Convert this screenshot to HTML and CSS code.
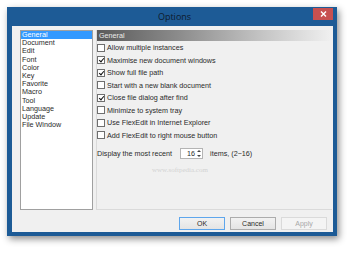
FILE: index.html
```html
<!DOCTYPE html>
<html lang="en">
<head>
    <meta charset="UTF-8">
    <title>Options</title>
    <link rel="stylesheet" href="styles.css">
</head>
<body>
    <div class="window">
        <div class="titlebar">
            <span class="title">Options</span>
            <div class="close">
                <svg width="7" height="6" viewBox="0 0 7 6">
                    <path d="M1 0.5 L6 5.5 M6 0.5 L1 5.5" stroke="#fff" stroke-width="1.4"/>
                </svg>
            </div>
        </div>

        <div class="client">
            <div class="main">
                <ul class="pages">
                    <li class="selected">General</li>
                    <li>Document</li>
                    <li>Edit</li>
                    <li>Font</li>
                    <li>Color</li>
                    <li>Key</li>
                    <li>Favorite</li>
                    <li>Macro</li>
                    <li>Tool</li>
                    <li>Language</li>
                    <li>Update</li>
                    <li>File Window</li>
                </ul>

                <div class="panel">
                    <div class="panel-head">General</div>

                    <div class="options">
                        <div class="opt"><span class="box"></span>Allow multiple instances</div>
                        <div class="opt"><span class="box checked"></span>Maximise new document windows</div>
                        <div class="opt"><span class="box checked"></span>Show full file path</div>
                        <div class="opt"><span class="box"></span>Start with a new blank document</div>
                        <div class="opt"><span class="box checked"></span>Close file dialog after find</div>
                        <div class="opt"><span class="box"></span>Minimize to system tray</div>
                        <div class="opt"><span class="box"></span>Use FlexEdit in Internet Explorer</div>
                        <div class="opt"><span class="box"></span>Add FlexEdit to right mouse button</div>
                    </div>

                    <div class="recent">
                        <span>Display the most recent</span>
                        <div class="spin">
                            <span class="spin-value">16</span>
                            <div class="spin-arrows">
                                <span class="up"></span>
                                <span class="down"></span>
                            </div>
                        </div>
                        <span>items, (2~16)</span>
                    </div>

                    <div class="watermark">www.softpedia.com</div>
                </div>
            </div>

            <div class="buttons">
                <div class="btn default">OK</div>
                <div class="btn">Cancel</div>
                <div class="btn disabled">Apply</div>
            </div>
        </div>
    </div>
</body>
</html>
```

FILE: styles.css
```css
* {
    margin: 0;
    padding: 0;
    box-sizing: border-box;
}

body {
    font-family: 'Liberation Sans', Arial, sans-serif;
    background: #ffffff;
    width: 350px;
    height: 254px;
    overflow: hidden;
    padding: 7px 0 0 7px;
}

.window {
    width: 330px;
    height: 229px;
    background: #1d5b96;
    padding: 0 4px 4px 5px;
    box-shadow: 2px 3px 7px rgba(0, 0, 0, 0.45);
}

.titlebar {
    height: 19px;
    position: relative;
    display: flex;
    align-items: center;
    justify-content: center;
}

.title {
    font-family: 'Open Sans', sans-serif;
    font-size: 9px;
    color: #0e1a2c;
    margin-left: 4px;
}

.close {
    position: absolute;
    right: 0;
    top: 1px;
    width: 20px;
    height: 12px;
    background: #c75050;
    display: flex;
    align-items: center;
    justify-content: center;
}

.client {
    height: 206px;
    background: #f0f0f0;
    padding: 4px 1px 0 8px;
    display: flex;
    flex-direction: column;
}

.main {
    display: flex;
    height: 180px;
    gap: 3px;
}

.pages {
    width: 73px;
    height: 180px;
    background: #ffffff;
    border: 1px solid #a0a0a0;
    list-style: none;
    font-size: 7.2px;
    color: #2a2a2a;
}

.pages li {
    height: 8.2px;
    line-height: 8.2px;
    padding-left: 1px;
}

.pages li.selected {
    background: #3399ff;
    color: #ffffff;
}

.panel {
    flex: 1;
    position: relative;
    border-left: 1px solid #dadada;
    border-bottom: 1px solid #dadada;
    font-size: 7.2px;
    color: #2a2a2a;
}

.panel-head {
    height: 11px;
    line-height: 11px;
    padding-left: 2px;
    color: #ececec;
    background: linear-gradient(to right, #5a5a5a, #8c8c8c 35%, #c4c4c4 70%, #f0f0f0);
}

.options {
    padding-top: 0.5px;
}

.opt {
    height: 12.5px;
    display: flex;
    align-items: center;
    gap: 2px;
}

.box {
    width: 8px;
    height: 8px;
    background: #ffffff;
    border: 1px solid #6f6f6f;
    position: relative;
}

.box.checked::after {
    content: '';
    position: absolute;
    left: 1.5px;
    top: 0px;
    width: 2px;
    height: 4px;
    border-right: 1.4px solid #111;
    border-bottom: 1.4px solid #111;
    transform: rotate(40deg);
}

.recent {
    margin-top: 6px;
    height: 12px;
    display: flex;
    align-items: center;
}

.spin {
    margin-left: 8px;
    margin-right: 7px;
    width: 23px;
    height: 11px;
    background: #ffffff;
    border: 1px solid #b4b4b4;
    display: flex;
    align-items: center;
    justify-content: flex-end;
}

.spin-value {
    margin-right: 1px;
}

.spin-arrows {
    width: 6px;
    height: 9px;
    display: flex;
    flex-direction: column;
    align-items: center;
    justify-content: space-around;
}

.spin-arrows .up {
    border-left: 2px solid transparent;
    border-right: 2px solid transparent;
    border-bottom: 2px solid #444;
}

.spin-arrows .down {
    border-left: 2px solid transparent;
    border-right: 2px solid transparent;
    border-top: 2px solid #444;
}

.watermark {
    position: absolute;
    left: 55px;
    top: 136px;
    font-family: 'Liberation Serif', serif;
    font-size: 7px;
    color: #d2d2d2;
}

.buttons {
    margin-top: 7px;
    margin-right: 5px;
    display: flex;
    justify-content: flex-end;
    gap: 5px;
}

.btn {
    width: 46px;
    height: 13px;
    font-size: 7px;
    color: #2a2a2a;
    display: flex;
    align-items: center;
    justify-content: center;
    border: 1px solid #acacac;
    background: linear-gradient(#f2f2f2, #e4e4e4);
}

.btn.default {
    border-color: #5ea6ec;
}

.btn.disabled {
    border-color: #dadada;
    background: #f4f4f4;
    color: #a8a8a8;
}
```
